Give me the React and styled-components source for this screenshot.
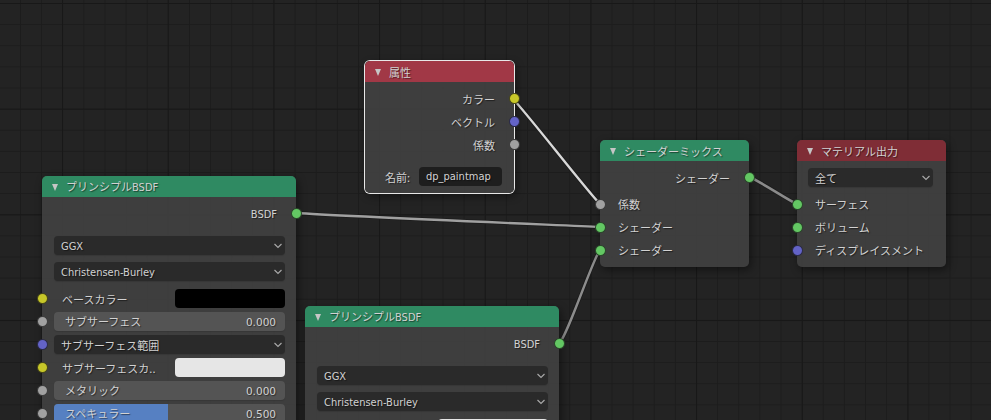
import React from "react";
import styled, { createGlobalStyle } from "styled-components";

const Global = createGlobalStyle`
  html, body { margin: 0; padding: 0; background: #232323; }
  #root { width: 991px; height: 420px; }
  * { box-sizing: border-box; }
`;

const FONT = `"Noto Sans CJK JP", "Noto Sans", sans-serif`;
const SOCKET = { yellow: "#c7c729", blue: "#6363c7", gray: "#a1a1a1", green: "#63c763" };

const Canvas = styled.main`
  position: relative;
  width: 991px;
  height: 420px;
  overflow: hidden;
  font: 11px/1 ${FONT};
  color: #d2d2d2;
  text-shadow: 1px 1px 1px rgba(0, 0, 0, 0.5);
  background-color: #232323;
  background-image:
    linear-gradient(to right, #181818 1px, transparent 1px),
    linear-gradient(to bottom, #181818 1px, transparent 1px),
    linear-gradient(to right, #1c1c1c 1px, transparent 1px),
    linear-gradient(to bottom, #1c1c1c 1px, transparent 1px);
  background-size: 105.7px 105.7px, 105.7px 105.7px, 21.14px 21.14px, 21.14px 21.14px;
  background-position: 62px 0, 0 3px, 20px 0, 0 3px;
`;

const Links = styled.svg`
  position: absolute;
  inset: 0;
  width: 991px;
  height: 420px;
`;

const Node = styled.section`
  position: absolute;
  left: ${(p) => p.$x}px;
  top: ${(p) => p.$y}px;
  width: ${(p) => p.$w}px;
  border-radius: 5px;
  background: rgba(64, 64, 64, 0.94);
  box-shadow: ${(p) =>
    p.$selected
      ? "0 0 0 1px #e8e8e8, 2px 3px 8px rgba(0,0,0,.45)"
      : "2px 3px 8px rgba(0,0,0,.45)"};
`;

const Header = styled.header`
  display: flex;
  align-items: center;
  height: 21px;
  padding: 1px 0 0 10px;
  gap: 8px;
  border-radius: 5px 5px 0 0;
  background: ${(p) => p.$color};
  color: ${(p) => p.$text};
`;

const Triangle = styled.i`
  width: 0;
  height: 0;
  border-left: 3.5px solid transparent;
  border-right: 3.5px solid transparent;
  border-top: 7px solid ${(p) => p.$color};
`;

const Body = styled.div`
  display: flex;
  flex-direction: column;
  padding: 5px 0 5px;
`;

const Latin = styled.span`
  font-family: "DejaVu Sans Condensed", "DejaVu Sans", sans-serif;
  font-stretch: condensed;
  font-size: 11px;
`;

const Digits = styled.span`
  font-family: "DejaVu Sans", sans-serif;
  font-size: 10.5px;
`;

const Row = styled.div`
  position: relative;
  display: flex;
  align-items: center;
  justify-content: ${(p) => (p.$out ? "flex-end" : "flex-start")};
  height: 23px;
  padding: 0 ${(p) => (p.$out ? 19 : p.$right ?? 11)}px 0 ${(p) => (p.$inset ? p.$left ?? 12 : 18)}px;
  margin-top: ${(p) => p.$gap || 0}px;
`;

const Label = styled.span`
  padding-top: 1px;
`;

const Socket = styled.span`
  position: absolute;
  top: 6px;
  ${(p) => (p.$right ? "right: -5.5px;" : "left: -5.5px;")}
  width: 11px;
  height: 11px;
  border-radius: 50%;
  background: ${(p) => p.$color};
  border: 1px solid rgba(20, 20, 20, 0.7);
`;

const Control = styled.div`
  position: relative;
  flex: 1;
  height: 19px;
  display: flex;
  align-items: center;
  justify-content: space-between;
  padding: 0 7px;
  border-radius: 4px;
  box-shadow: 0 1px 1px rgba(0, 0, 0, 0.12);
`;

const Dropdown = styled(Control)`
  background: #2a2a2a;
  padding-right: 2px;
`;

const Chevron = () => (
  <svg width="10" height="6" viewBox="0 0 10 6" fill="none" stroke="#a8a8a8" strokeWidth="1.2">
    <path d="M1.5 1l3.5 3.4L8.500 1" />
  </svg>
);

const Slider = styled(Control)`
  background: #545454;
  overflow: hidden;
  padding: 0 9px 0 11px;
`;

const SliderFill = styled.div`
  position: absolute;
  left: 0;
  top: 0;
  bottom: 0;
  background: #5680c2;
`;

const SliderText = styled.span`
  position: relative;
`;

const ColorLabel = styled.span`
  width: 121px;
  padding: 1px 0 0 8px;
  white-space: nowrap;
`;

const Swatch = styled.div`
  width: 110px;
  height: 19px;
  border-radius: 4px;
  background: ${(p) => p.$color};
`;

const NameLabel = styled.span`
  width: 42px;
  padding: 1px 0 0 8px;
  white-space: nowrap;
`;

const NameField = styled.div`
  width: 83px;
  height: 19px;
  display: flex;
  align-items: center;
  padding-left: 7px;
  border-radius: 4px;
  background: #1e1e1e;
`;

function NodeBox({ x, y, w, color, text = "#d2d2d2", tri = "#c6c6c6", title, selected, children }) {
  return (
    <Node $x={x} $y={y} $w={w} $selected={selected}>
      <Header $color={color} $text={text}>
        <Triangle $color={tri} />
        <span>{title}</span>
      </Header>
      <Body>{children}</Body>
    </Node>
  );
}

const Out = ({ color, children, gap }) => (
  <Row $out $gap={gap}>
    <Label>{children}</Label>
    <Socket $right $color={SOCKET[color]} />
  </Row>
);

const In = ({ color, children, gap }) => (
  <Row $gap={gap}>
    <Label>{children}</Label>
    <Socket $color={SOCKET[color]} />
  </Row>
);

const Select = ({ label, gap, socket, left, right }) => (
  <Row $inset $gap={gap} $left={left} $right={right}>
    {socket && <Socket $color={SOCKET[socket]} />}
    <Dropdown>
      <Label>{label}</Label>
      <Chevron />
    </Dropdown>
  </Row>
);

const ColorRow = ({ label, color, socket, gap }) => (
  <Row $inset $gap={gap}>
    <Socket $color={SOCKET[socket]} />
    <ColorLabel>{label}</ColorLabel>
    <Swatch $color={color} />
  </Row>
);

const SliderRow = ({ label, value, fill, socket }) => (
  <Row $inset>
    <Socket $color={SOCKET[socket]} />
    <Slider>
      {fill > 0 && <SliderFill style={{ width: `${fill * 100}%` }} />}
      <SliderText>{label}</SliderText>
      <SliderText>
        <Digits>{value}</Digits>
      </SliderText>
    </Slider>
  </Row>
);

const GREEN = "#2f8a62";
const BsdfTitle = () => (
  <>
    プリンシプル<Latin>BSDF</Latin>
  </>
);

export default function App() {
  return (
    <Canvas>
      <Global />
      <Links viewBox="0 0 991 420" fill="none" strokeLinecap="round">
        <path d="M296 213C340 216 556 225 600 227" stroke="#1c1c1c" strokeWidth="4" />
        <path d="M296 213C340 216 556 225 600 227" stroke="#a0a0a0" strokeWidth="2.4" />
        <path d="M559 343C566 340 593 258 600 250" stroke="#1c1c1c" strokeWidth="4" />
        <path d="M559 343C566 340 593 258 600 250" stroke="#8c8c8c" strokeWidth="2.4" />
        <path d="M749 177C760 181 786 199 797 204" stroke="#1c1c1c" strokeWidth="4" />
        <path d="M749 177C760 181 786 199 797 204" stroke="#8a8a8a" strokeWidth="2.6" />
        <path d="M513 99C526 112 587 191 600 204" stroke="#1c1c1c" strokeWidth="4" />
        <path d="M513 99C526 112 587 191 600 204" stroke="#d8d8d8" strokeWidth="2.4" />
      </Links>

      <NodeBox x={365} y={61} w={149} color="#a13846" title="属性" selected>
        <Out color="yellow">カラー</Out>
        <Out color="blue">ベクトル</Out>
        <Out color="gray">係数</Out>
        <Row $inset $gap={9}>
          <NameLabel>名前:</NameLabel>
          <NameField>
            <Latin>dp_paintmap</Latin>
          </NameField>
        </Row>
      </NodeBox>

      <NodeBox x={600} y={140} w={149} color={GREEN} title="シェーダーミックス">
        <Out color="green">シェーダー</Out>
        <In color="gray" gap={3.5}>係数</In>
        <In color="green">シェーダー</In>
        <In color="green">シェーダー</In>
      </NodeBox>

      <NodeBox x={797} y={140} w={149} color="#7f2d36" title="マテリアル出力">
        <Select label="全て" left={11} right={13} />
        <In color="green" gap={3.5}>サーフェス</In>
        <In color="green">ボリューム</In>
        <In color="blue">ディスプレイスメント</In>
      </NodeBox>

      <NodeBox x={42} y={176} w={254} color={GREEN} title={<BsdfTitle />}>
        <Out color="green"><Latin>BSDF</Latin></Out>
        <Select label={<Latin>GGX</Latin>} gap={9} />
        <Select label={<Latin>Christensen-Burley</Latin>} gap={3} />
        <ColorRow label="ベースカラー" color="#000000" socket="yellow" gap={4} />
        <SliderRow label="サブサーフェス" value="0.000" socket="gray" />
        <Select label="サブサーフェス範囲" socket="blue" />
        <ColorRow label="サブサーフェスカ.." color="#e6e6e6" socket="yellow" />
        <SliderRow label="メタリック" value="0.000" socket="gray" />
        <SliderRow label="スペキュラー" value="0.500" fill={0.495} socket="gray" />
      </NodeBox>

      <NodeBox x={305} y={306} w={254} color={GREEN} title={<BsdfTitle />}>
        <Out color="green"><Latin>BSDF</Latin></Out>
        <Select label={<Latin>GGX</Latin>} gap={9} />
        <Select label={<Latin>Christensen-Burley</Latin>} gap={3} />
        <ColorRow color="#e6e6e6" socket="yellow" gap={4} />
      </NodeBox>
    </Canvas>
  );
}
